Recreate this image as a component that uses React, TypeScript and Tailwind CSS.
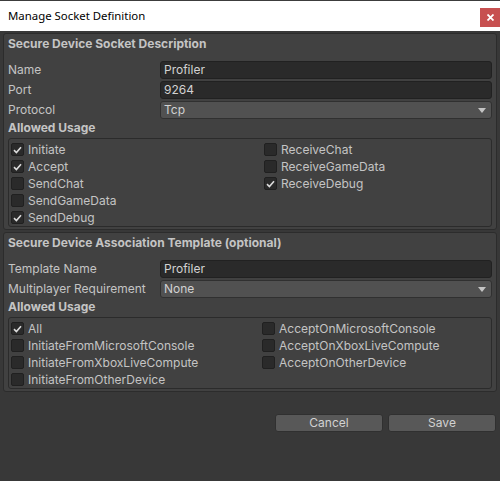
import React from 'react';

type Item = { label: string; checked?: boolean };

const Check = ({ checked }: { checked?: boolean }) => (
  <div className="w-[13px] h-[13px] rounded-[2px] bg-[#2a2a2a] border border-[#202020] flex items-center justify-center shrink-0">
    {checked && (
      <svg width="9" height="8" viewBox="0 0 9 8">
        <path d="M1 4.2 L3.4 6.5 L8 1.2" fill="none" stroke="#dcdcdc" strokeWidth="1.6" />
      </svg>
    )}
  </div>
);

const CheckRow = ({ item }: { item: Item }) => (
  <div className="h-[17px] flex items-center gap-[4px]">
    <Check checked={item.checked} />
    <span>{item.label}</span>
  </div>
);

const UsageBox = ({ left, right, leftWidth }: { left: Item[]; right: Item[]; leftWidth: string }) => (
  <div className="mt-[1px] border border-[#2b2b2b] rounded-[3px] pl-[2px] pt-[2px] flex">
    <div className={`${leftWidth} flex flex-col`}>
      {left.map((i) => (
        <CheckRow key={i.label} item={i} />
      ))}
    </div>
    <div className="flex flex-col">
      {right.map((i) => (
        <CheckRow key={i.label} item={i} />
      ))}
    </div>
  </div>
);

const TextField = ({ value }: { value: string }) => (
  <div className="flex-1 h-[18px] rounded-[3px] bg-[#2a2a2a] border border-[#212121] px-[3px] flex items-center text-[#d2d2d2]">
    {value}
  </div>
);

const Dropdown = ({ value }: { value: string }) => (
  <div className="flex-1 h-[18px] rounded-[3px] bg-[#515151] border border-[#303030] px-[3px] flex items-center justify-between text-[#d2d2d2]">
    <span>{value}</span>
    <svg width="8" height="5" viewBox="0 0 8 5" className="mr-[2px]">
      <path d="M0 0 H8 L4 5 Z" fill="#c4c4c4" />
    </svg>
  </div>
);

const FieldRow = ({ label, children }: { label: string; children: React.ReactNode }) => (
  <div className="flex items-center">
    <span className="w-[152px] shrink-0">{label}</span>
    {children}
  </div>
);

export default function App() {
  return (
    <div
      className="w-[500px] h-[481px] bg-[#383838] flex flex-col overflow-hidden text-[12px] text-[#c4c4c4] leading-none"
      style={{ fontFamily: 'Inter, "Noto Sans", sans-serif' }}
    >
      {/* title bar */}
      <div className="h-[31px] bg-white border-t border-[#3c3c3c] flex items-start shrink-0">
        <span
          className="pl-[8px] mt-[9px] text-[11.4px] text-black"
          style={{ fontFamily: '"Noto Sans", sans-serif' }}
        >
          Manage Socket Definition
        </span>
        <div className="ml-auto mt-[7px] w-[20px] h-[19px] bg-[#c75050] flex items-center justify-center">
          <svg width="7" height="7" viewBox="0 0 7 7">
            <path d="M0.5 0.5 L6.5 6.5 M6.5 0.5 L0.5 6.5" stroke="white" strokeWidth="1.8" />
          </svg>
        </div>
      </div>

      <div className="px-[3px] pt-[2px] flex flex-col gap-[2px]">
        {/* section 1 */}
        <div className="bg-[#414141] border border-[#2c2c2c] rounded-[3px] px-[4px] pb-[2px]">
          <div className="h-[20px] flex items-center font-bold">Secure Device Socket Description</div>
          <div className="mt-[7px] flex flex-col gap-[2px]">
            <FieldRow label="Name">
              <TextField value="Profiler" />
            </FieldRow>
            <FieldRow label="Port">
              <TextField value="9264" />
            </FieldRow>
            <FieldRow label="Protocol">
              <Dropdown value="Tcp" />
            </FieldRow>
          </div>
          <div className="h-[18px] flex items-center font-bold">Allowed Usage</div>
          <UsageBox
            leftWidth="w-[253px]"
            left={[
              { label: 'Initiate', checked: true },
              { label: 'Accept', checked: true },
              { label: 'SendChat' },
              { label: 'SendGameData' },
              { label: 'SendDebug', checked: true },
            ]}
            right={[
              { label: 'ReceiveChat' },
              { label: 'ReceiveGameData' },
              { label: 'ReceiveDebug', checked: true },
            ]}
          />
        </div>

        {/* section 2 */}
        <div className="bg-[#414141] border border-[#2c2c2c] rounded-[3px] px-[4px] pb-[2px]">
          <div className="h-[20px] flex items-center font-bold">Secure Device Association Template (optional)</div>
          <div className="mt-[7px] flex flex-col gap-[2px]">
            <FieldRow label="Template Name">
              <TextField value="Profiler" />
            </FieldRow>
            <FieldRow label="Multiplayer Requirement">
              <Dropdown value="None" />
            </FieldRow>
          </div>
          <div className="h-[18px] flex items-center font-bold">Allowed Usage</div>
          <UsageBox
            leftWidth="w-[251px]"
            left={[
              { label: 'All', checked: true },
              { label: 'InitiateFromMicrosoftConsole' },
              { label: 'InitiateFromXboxLiveCompute' },
              { label: 'InitiateFromOtherDevice' },
            ]}
            right={[
              { label: 'AcceptOnMicrosoftConsole' },
              { label: 'AcceptOnXboxLiveCompute' },
              { label: 'AcceptOnOtherDevice' },
            ]}
          />
        </div>
      </div>

      {/* buttons */}
      <div className="mt-[22px] pr-[4px] flex justify-end gap-[5px]">
        <button className="w-[108px] h-[18px] rounded-[3px] bg-[#585858] border border-[#303030] text-[#d2d2d2]">Cancel</button>
        <button className="w-[108px] h-[18px] rounded-[3px] bg-[#585858] border border-[#303030] text-[#d2d2d2]">Save</button>
      </div>
    </div>
  );
}
